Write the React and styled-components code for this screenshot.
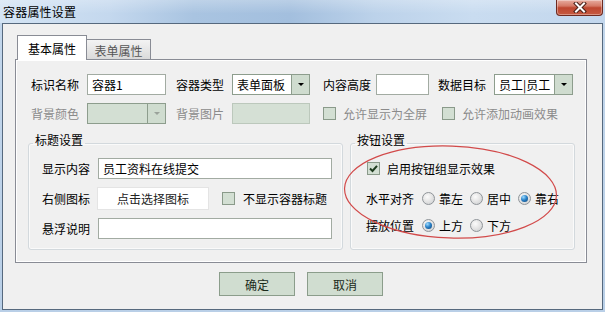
import React from 'react';
import styled, { createGlobalStyle } from 'styled-components';

const FONT = `"Noto Sans CJK SC", "Noto Sans", "Liberation Sans", sans-serif`;

const Global = createGlobalStyle`
  html, body { margin: 0; padding: 0; background: #ffffff; }
  body { font-family: ${FONT}; font-size: 12px; }
  * { box-sizing: border-box; }
`;

const Window = styled.div`
  position: relative;
  width: 605px;
  height: 312px;
  display: flex;
  flex-direction: column;
  padding: 0 2px 2px 2px;
  background: linear-gradient(to bottom, #c3d7ec, #b9cfe7);
  font-family: ${FONT};
  font-size: 12px;
  color: #000;
`;

const TitleBar = styled.div`
  height: 23px;
  margin: 0 -2px;
  display: flex;
  align-items: flex-start;
  justify-content: space-between;
  background:
    linear-gradient(to bottom, rgba(255,255,255,0.25), rgba(255,255,255,0) 60%),
    linear-gradient(to right, #d4e4f4 0%, #c4d8ee 18%, #a9c4e1 32%, #a3bfde 48%, #bcd2ea 62%, #c9dcf0 78%, #c3d7ed 100%);
`;

const TitleText = styled.div`
  padding-left: 3px;
  margin-top: 5px;
  line-height: 13px;
  font-size: 12px;
  color: #000;
  letter-spacing: 0.2px;
`;

const CloseButton = styled.div`
  width: 47px;
  height: 16px;
  margin-right: 2px;
  display: flex;
  align-items: center;
  justify-content: center;
  border: 1px solid #6e2a20;
  border-top: none;
  border-radius: 0 0 4px 4px;
  background: linear-gradient(to bottom, #e7ad9f 0%, #d57a66 40%, #be4730 52%, #c65a41 100%);
  box-shadow: inset 0 0 0 1px rgba(255,255,255,0.35);
`;

const Client = styled.div`
  flex: 1;
  display: flex;
  flex-direction: column;
  border: 1px solid #56697e;
  background: #f0f0f0;
  padding: 11px 15px 0 12px;
`;

const TabStrip = styled.div`
  height: 24px;
  display: flex;
  align-items: flex-end;
  padding-left: 2px;
`;

const Tab = styled.div`
  position: relative;
  z-index: ${(p) => (p.$active ? 2 : 1)};
  width: ${(p) => p.$w}px;
  height: ${(p) => (p.$active ? 25 : 20)}px;
  margin-bottom: ${(p) => (p.$active ? -1 : 0)}px;
  display: flex;
  align-items: center;
  justify-content: center;
  border: 1px solid #898c95;
  border-bottom: none;
  border-left: ${(p) => (p.$active ? '1px solid #898c95' : 'none')};
  background: ${(p) => (p.$active ? '#ffffff' : 'linear-gradient(to bottom, #f3f3f3, #dadada)')};
  color: ${(p) => (p.$active ? '#000' : '#555')};
  padding-top: ${(p) => (p.$active ? 0 : 1)}px;
`;

const Panel = styled.div`
  height: 204px;
  border: 1px solid #898c95;
  box-shadow: inset 0 0 0 1px #ffffff;
  background: #f0f0f0;
  padding-top: 14px;
  display: flex;
  flex-direction: column;
`;

const Row = styled.div`
  display: flex;
  align-items: center;
  height: ${(p) => p.$h || 21}px;
  margin-top: ${(p) => p.$mt || 0}px;
  margin-left: ${(p) => p.$ml || 0}px;
`;

const Label = styled.span`
  display: inline-block;
  margin-left: ${(p) => p.$ml || 0}px;
  color: ${(p) => (p.$disabled ? '#8b8b8b' : '#000')};
  line-height: 14px;
  white-space: nowrap;
`;

const TextBox = styled.div`
  width: ${(p) => p.$w}px;
  height: ${(p) => p.$h || 21}px;
  margin-left: ${(p) => p.$ml || 0}px;
  border: 1px solid ${(p) => (p.$disabled ? '#bcc8bc' : '#a2aba2')};
  background: ${(p) => (p.$disabled ? '#d5e0d5' : '#ffffff')};
  padding-left: 4px;
  display: flex;
  align-items: center;
  white-space: nowrap;
  overflow: hidden;
`;

const SelectBox = styled.div`
  width: ${(p) => p.$w}px;
  height: 21px;
  margin-left: ${(p) => p.$ml || 0}px;
  display: flex;
  border: 1px solid #8d9d8d;
  background: ${(p) => (p.$disabled ? '#d3dfd3' : '#ffffff')};
`;

const SelectValue = styled.div`
  flex: 1;
  min-width: 0;
  padding-left: 4px;
  display: flex;
  align-items: center;
  white-space: nowrap;
  overflow: hidden;
`;

const SelectArrow = styled.div`
  width: 18px;
  display: flex;
  align-items: center;
  justify-content: center;
  border-left: 1px solid #8d9d8d;
  background: #cfdccf;
  &::after {
    content: '';
    border-left: 3px solid transparent;
    border-right: 3px solid transparent;
    border-top: 3px solid ${(p) => (p.$disabled ? '#9aa29a' : '#000')};
  }
`;

const CheckBox = styled.span`
  width: 13px;
  height: 13px;
  margin-left: ${(p) => p.$ml || 0}px;
  margin-right: ${(p) => p.$mr || 7}px;
  display: inline-flex;
  align-items: center;
  justify-content: center;
  flex-shrink: 0;
  border: 1px solid #8a9a8a;
  background: #d3dfd3;
`;

const Radio = styled.span`
  position: relative;
  width: 13px;
  height: 13px;
  margin-left: ${(p) => p.$ml || 0}px;
  margin-right: 4px;
  flex-shrink: 0;
  border-radius: 50%;
  border: 1px solid #8f9499;
  background: radial-gradient(circle at 40% 35%, #fbfbfb 0%, #e6e6e6 45%, #c9cbcd 100%);
  &::after {
    content: '';
    display: ${(p) => (p.$checked ? 'block' : 'none')};
    position: absolute;
    left: 2px;
    top: 2px;
    width: 7px;
    height: 7px;
    border-radius: 50%;
    background: radial-gradient(circle at 35% 30%, #9fdcff 0%, #2b83c9 45%, #0b3f73 100%);
  }
`;

const GroupsRow = styled.div`
  display: flex;
  gap: 7px;
  margin-top: 9px;
  margin-left: 12px;
`;

const Group = styled.fieldset`
  width: ${(p) => p.$w}px;
  height: 117px;
  margin: 0;
  padding: 0 0 0 ${(p) => p.$pl}px;
  min-width: 0;
  border: 1px solid #d3d9dd;
  border-radius: 3px;
  box-shadow: inset 0 0 0 1px #fafafa;
`;

const Legend = styled.legend`
  margin-left: ${(p) => 4 - p.$pl}px;
  padding: 0 2px 6px 2px;
  line-height: 14px;
  font-size: 12px;
`;

const PickButton = styled.div`
  width: 112px;
  height: 23px;
  margin-left: ${(p) => p.$ml || 0}px;
  display: flex;
  align-items: center;
  justify-content: center;
  background: #ffffff;
  border: 1px solid #e4e4e4;
  color: #222;
`;

const ButtonRow = styled.div`
  display: flex;
  justify-content: center;
  gap: 12px;
  margin-top: 9px;
`;

const DialogButton = styled.div`
  width: 76px;
  height: 24px;
  display: flex;
  align-items: center;
  justify-content: center;
  background: #d0ddd0;
  border: 1px solid #8b9d8b;
  color: #1a2a1a;
`;

const Annotation = styled.svg`
  position: absolute;
  left: 340px;
  top: 140px;
  pointer-events: none;
`;

function Check() {
  return (
    <svg width="11" height="11" viewBox="0 0 11 11">
      <path d="M2 5.5 L4.5 8 L9 2.8" fill="none" stroke="#1e3b1e" strokeWidth="2" />
    </svg>
  );
}

function CloseX() {
  return (
    <svg width="14" height="11" viewBox="0 0 14 11">
      <path d="M3 1.5 L11 9.5 M11 1.5 L3 9.5" stroke="#4a2018" strokeWidth="4" strokeLinecap="square" />
      <path d="M3 1.5 L11 9.5 M11 1.5 L3 9.5" stroke="#ffffff" strokeWidth="2" strokeLinecap="square" />
    </svg>
  );
}

function Select({ w, ml, value, disabled }) {
  return (
    <SelectBox $w={w} $ml={ml} $disabled={disabled}>
      <SelectValue>{value}</SelectValue>
      <SelectArrow $disabled={disabled} />
    </SelectBox>
  );
}

export default function App() {
  return (
    <>
      <Global />
      <Window>
        <TitleBar>
          <TitleText>容器属性设置</TitleText>
          <CloseButton>
            <CloseX />
          </CloseButton>
        </TitleBar>
        <Client>
          <TabStrip>
            <Tab $active $w={70}>基本属性</Tab>
            <Tab $w={64}>表单属性</Tab>
          </TabStrip>
          <Panel>
            <Row $ml={15}>
              <Label>标识名称</Label>
              <TextBox $w={79} $ml={8}>容器1</TextBox>
              <Label $ml={10}>容器类型</Label>
              <Select w={78} ml={8} value="表单面板" />
              <Label $ml={13}>内容高度</Label>
              <TextBox $w={53} $ml={5} />
              <Label $ml={9}>数据目标</Label>
              <Select w={79} ml={8} value="员工|员工" />
            </Row>
            <Row $ml={15} $mt={8}>
              <Label $disabled>背景颜色</Label>
              <Select w={79} ml={8} value="" disabled />
              <Label $ml={10} $disabled>背景图片</Label>
              <TextBox $w={78} $ml={8} $disabled />
              <CheckBox $ml={13} />
              <Label $disabled>允许显示为全屏</Label>
              <CheckBox $ml={15} />
              <Label $disabled>允许添加动画效果</Label>
            </Row>
            <GroupsRow>
              <Group $w={315} $pl={13}>
                <Legend $pl={13}>标题设置</Legend>
                <Row $mt={5}>
                  <Label>显示内容</Label>
                  <TextBox $w={234} $ml={8}>员工资料在线提交</TextBox>
                </Row>
                <Row $mt={8} $h={23}>
                  <Label>右侧图标</Label>
                  <PickButton $ml={7}>点击选择图标</PickButton>
                  <CheckBox $ml={13} $mr={8} />
                  <Label>不显示容器标题</Label>
                </Row>
                <Row $mt={8}>
                  <Label>悬浮说明</Label>
                  <TextBox $w={234} $ml={8} />
                </Row>
              </Group>
              <Group $w={225} $pl={15}>
                <Legend $pl={15}>按钮设置</Legend>
                <Row $mt={5} $ml={1}>
                  <CheckBox $mr={7}>
                    <Check />
                  </CheckBox>
                  <Label>启用按钮组显示效果</Label>
                </Row>
                <Row $mt={9}>
                  <Label>水平对齐</Label>
                  <Radio $ml={8} />
                  <Label>靠左</Label>
                  <Radio $ml={7} />
                  <Label>居中</Label>
                  <Radio $ml={7} $checked />
                  <Label>靠右</Label>
                </Row>
                <Row $mt={6}>
                  <Label>摆放位置</Label>
                  <Radio $ml={8} $checked />
                  <Label>上方</Label>
                  <Radio $ml={7} />
                  <Label>下方</Label>
                </Row>
              </Group>
            </GroupsRow>
          </Panel>
          <ButtonRow>
            <DialogButton>确定</DialogButton>
            <DialogButton>取消</DialogButton>
          </ButtonRow>
        </Client>
        <Annotation width="225" height="105" viewBox="0 0 225 105">
          <ellipse cx="110.5" cy="52" rx="106" ry="46" fill="none" stroke="#d24a4a" strokeWidth="1.2" transform="rotate(2 110.5 52)" />
        </Annotation>
      </Window>
    </>
  );
}
